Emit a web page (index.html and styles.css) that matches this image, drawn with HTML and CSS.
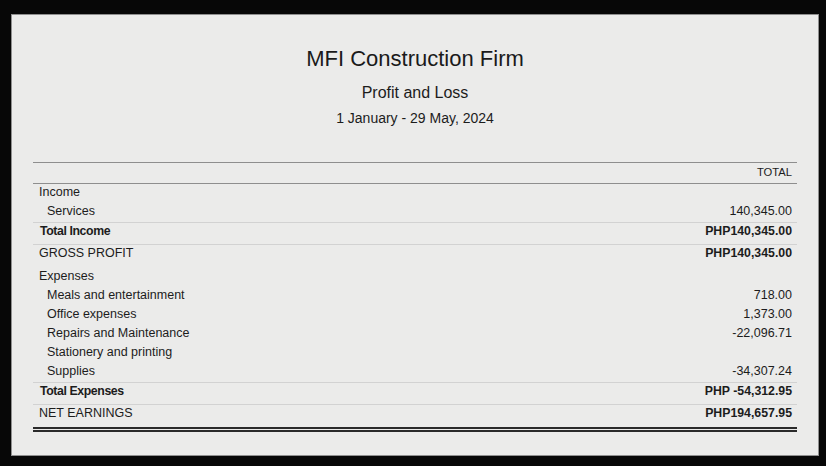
FILE: index.html
```html
<!DOCTYPE html>
<html lang="en">
<head>
<meta charset="utf-8">
<title>Profit and Loss</title>
<link rel="stylesheet" href="styles.css">
</head>
<body>
<div class="panel">
  <header class="report-head">
    <h1 class="company">MFI Construction Firm</h1>
    <div class="subtitle">Profit and Loss</div>
    <div class="period">1 January - 29 May, 2024</div>
  </header>
  <div class="report">
    <div class="row head"><span class="label"></span><span class="amount">TOTAL</span></div>
    <div class="row section"><span class="label">Income</span><span class="amount"></span></div>
    <div class="row item"><span class="label">Services</span><span class="amount">140,345.00</span></div>
    <div class="row total"><span class="label">Total Income</span><span class="amount">PHP140,345.00</span></div>
    <div class="row grand gross"><span class="label">GROSS PROFIT</span><span class="amount">PHP140,345.00</span></div>
    <div class="row section"><span class="label">Expenses</span><span class="amount"></span></div>
    <div class="row item"><span class="label">Meals and entertainment</span><span class="amount">718.00</span></div>
    <div class="row item"><span class="label">Office expenses</span><span class="amount">1,373.00</span></div>
    <div class="row item"><span class="label">Repairs and Maintenance</span><span class="amount">-22,096.71</span></div>
    <div class="row item"><span class="label">Stationery and printing</span><span class="amount"></span></div>
    <div class="row item"><span class="label">Supplies</span><span class="amount">-34,307.24</span></div>
    <div class="row total"><span class="label">Total Expenses</span><span class="amount">PHP -54,312.95</span></div>
    <div class="row grand net"><span class="label">NET EARNINGS</span><span class="amount">PHP194,657.95</span></div>
    <div class="double-rule"></div>
  </div>
</div>
</body>
</html>
```
FILE: styles.css
```css
html, body {
  margin: 0;
  padding: 0;
  background: #070707;
}
body {
  width: 826px;
  height: 466px;
  overflow: hidden;
  font-family: "Liberation Sans", Arial, Helvetica, sans-serif;
  color: #1c1c1c;
}
.panel {
  box-sizing: border-box;
  margin: 14px 0 0 11px;
  width: 808px;
  height: 442px;
  background: #ebebea;
  border: 1px solid #8f8f8f;
  padding: 31px 21px 0 21px;
}
.report-head {
  text-align: center;
}
.company {
  margin: 0;
  font-size: 22px;
  line-height: 26px;
  font-weight: normal;
  color: #1a1a1a;
}
.subtitle {
  margin-top: 11px;
  font-size: 16px;
  line-height: 20px;
}
.period {
  margin-top: 6px;
  font-size: 14px;
  line-height: 18px;
}
.report {
  margin-top: 35px;
}
.row {
  display: flex;
  justify-content: space-between;
  align-items: baseline;
  font-size: 12.5px;
  line-height: 17px;
  padding: 0 5px 2px 6px;
}
.row.head {
  border-top: 1px solid #8e8e8e;
  border-bottom: 1px solid #8e8e8e;
  font-size: 11.2px;
  line-height: 19px;
  padding-bottom: 1px;
}
.row.item .label {
  padding-left: 8px;
}
.row.total {
  border-top: 1px solid #d2d2d2;
  font-size: 12.3px;
  font-weight: bold;
  padding-bottom: 4px;
  padding-left: 7px;
}
.row.total .label {
  letter-spacing: -0.4px;
}
.row.total + .row.grand {
  padding-bottom: 6px;
}
.row.grand {
  border-top: 1px solid #d2d2d2;
}
.row.grand .amount {
  font-size: 12.3px;
  font-weight: bold;
}
.row.net {
  padding-bottom: 5px;
}
.row.total + .row.net {
  padding-bottom: 5px;
}
.double-rule {
  height: 1px;
  border-top: 2px solid #2a2a2a;
  border-bottom: 2px solid #2a2a2a;
}
```
